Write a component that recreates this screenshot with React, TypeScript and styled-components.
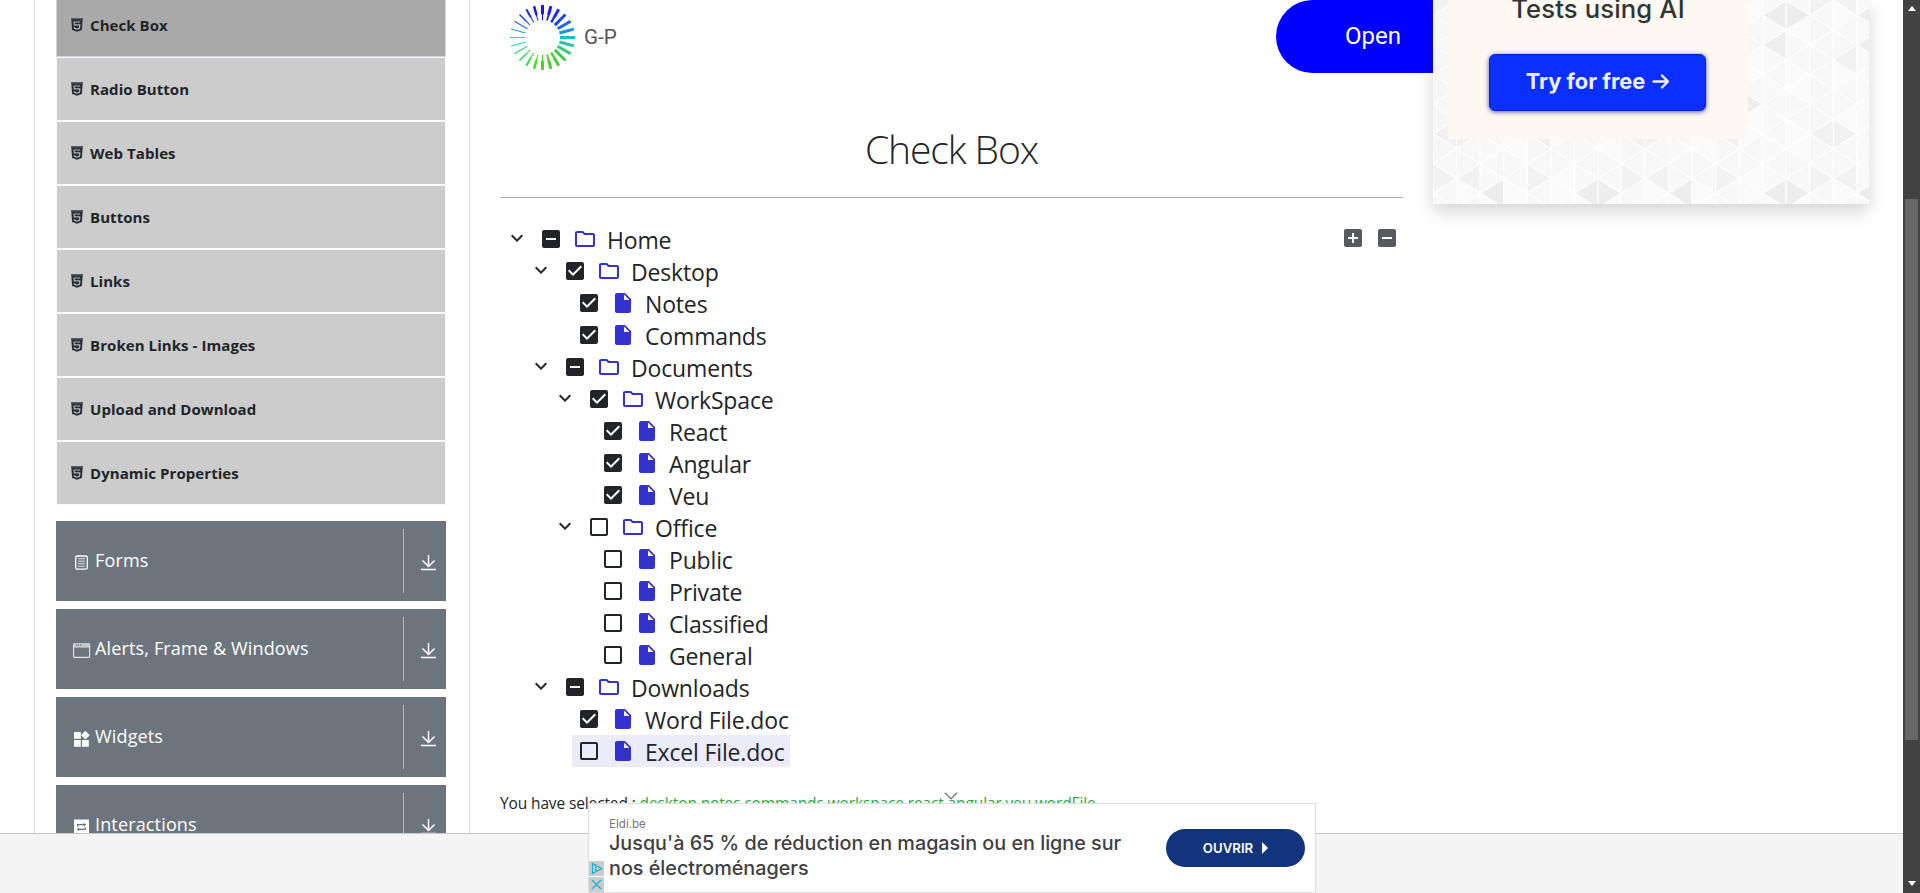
import React from 'react';
import styled, { createGlobalStyle } from 'styled-components';

const GlobalStyle = createGlobalStyle`
  *, *::before, *::after { box-sizing: border-box; }
  html, body { margin: 0; padding: 0; overflow: hidden; background: #fff; }
  body { font-family: "Open Sans", "Noto Sans", sans-serif; color: #212529; }
  svg { display: block; flex: none; }
`;

/* ---------- page frame ---------- */
const Frame = styled.div`
  display: grid;
  grid-template-columns: minmax(0, 1fr) 17px;
  height: 893px;
  overflow: hidden;
`;
const Page = styled.div`
  position: relative;
  overflow: hidden;
`;
const Columns = styled.div`
  display: grid;
  grid-template-columns: 436px 963px 436px;
  height: 893px;
  padding-left: 34px;
`;

/* ---------- scrollbar ---------- */
const Scrollbar = styled.div`
  display: flex;
  flex-direction: column;
  align-items: center;
  justify-content: space-between;
  background: #424242;
  padding: 6px 0 7px;
`;
const Thumb = styled.div`
  width: 13px;
  height: 541px;
  margin-top: 46px;
  background: #686868;
`;
const Arrow = styled.svg.attrs({ width: 8, height: 5, viewBox: '0 0 8 5' })`
  fill: #fff;
`;

/* ---------- sidebar ---------- */
const Sidebar = styled.aside`
  border: solid #dcdcdc;
  border-width: 0 1px;
  padding: 0 23px 0 21px;
`;
const MenuList = styled.ul`
  list-style: none;
  margin: -7px 0 16px;
  padding: 0;
`;
const MenuItem = styled.li<{ $active?: boolean }>`
  display: flex;
  align-items: center;
  gap: 7px;
  height: 64px;
  padding: 0 14px;
  border: 1px solid ${p => (p.$active ? '#ced4da' : '#f8f9fa')};
  background: ${p => (p.$active ? '#a9a9a9' : '#ccc')};
  font-size: 15px;
  font-weight: 700;
  letter-spacing: 0.07px;
  white-space: nowrap;
  svg { margin-top: -1px; }
`;
const GroupHeader = styled.div`
  display: flex;
  align-items: center;
  height: 80px;
  margin-bottom: 8px;
  padding-left: 17px;
  background: #6c757d;
  color: #fff;
`;
const GroupTitle = styled.span`
  flex: 1;
  padding-bottom: 2px;
  margin-left: 4px;
  font-size: 18px;
  letter-spacing: 0.15px;
  white-space: nowrap;
`;
const GroupToggle = styled.span`
  display: flex;
  align-items: center;
  justify-content: flex-end;
  width: 43px;
  height: 64px;
  padding: 4px 10px 0 0;
  border-left: 1px solid #b5babd;
`;
const GroupIcon = styled.svg.attrs({ width: 18, height: 18, viewBox: '0 0 18 18', fill: 'none' })`
  margin-top: 3px;
`;

/* ---------- centre column ---------- */
const Main = styled.main`
  min-width: 0;
  padding: 0 30px;
`;
const Banner = styled.header`
  display: flex;
  height: 73px;
  margin-right: -30px;
  padding-left: 10px;
`;
const BannerLogo = styled.svg.attrs({ width: 65, height: 65, viewBox: '-32.5 -32.5 65 65' })`
  margin-top: 5px;
`;
const BannerName = styled.span`
  flex: 1;
  margin: 25px 0 0 9px;
  font: 400 20.6px/24px Roboto, sans-serif;
  color: #555;
`;
const OpenButton = styled.div`
  width: 157px;
  padding-left: 69px;
  border-radius: 36.5px 0 0 36.5px;
  background: #00f;
  color: #fff;
  font: 400 24px/72px Roboto, sans-serif;
`;
const Title = styled.h1`
  height: 123px;
  margin: 0;
  padding-top: 49px;
  text-align: center;
  font-size: 39px;
  font-weight: 300;
  line-height: 54px;
  letter-spacing: -1.1px;
`;
const Rule = styled.hr`
  margin: 1px 0 25px;
  border: 0;
  border-top: 1px solid #acacac;
`;
const TreeArea = styled.section`
  display: flex;
  justify-content: space-between;
  align-items: flex-start;
`;
const Tree = styled.ul`
  list-style: none;
  margin: 0;
  padding: 0;
`;
const TreeRow = styled.li<{ $depth: number }>`
  display: flex;
  height: 32px;
  padding-left: ${p => p.$depth * 24}px;
`;
const Expander = styled.span<{ $leaf: boolean }>`
  width: ${p => (p.$leaf ? 24 : 34)}px;
  padding: 3px 0 0 5px;
`;
const TreeLabel = styled.span<{ $hover?: boolean }>`
  display: flex;
  gap: 10px;
  padding: 4px 5px 0;
  background: ${p => (p.$hover ? '#ebebfa' : 'transparent')};
`;
const TreeText = styled.span`
  margin-top: -4px;
  font-size: 23px;
  line-height: 34px;
  letter-spacing: -0.16px;
  white-space: nowrap;
`;
const TreeTools = styled.div`
  display: flex;
  gap: 10px;
  padding: 3px 4px 0 0;
`;
const Result = styled.p`
  display: flex;
  gap: 4px;
  margin: 24px 0 0;
  font-size: 15.5px;
  line-height: 24px;
  letter-spacing: -0.13px;
  white-space: nowrap;
`;
const ResultNames = styled.span`
  color: #28a745;
`;

/* ---------- right promo card ---------- */
const Card = styled.aside`
  display: grid;
  width: 436px;
  height: 204px;
  box-shadow: 0 8px 16px rgba(0, 0, 0, 0.16);
  > * { grid-area: 1 / 1; }
`;
const Promo = styled.div`
  z-index: 1;
  width: 300px;
  height: 139px;
  margin-left: 15px;
  padding-left: 41px;
  background: #fdf8f2;
  font-family: Inter, sans-serif;
`;
const PromoText = styled.div`
  width: 218px;
  height: 54px;
  margin-top: -8px;
  text-align: center;
  color: #333;
  font-size: 25.6px;
  font-weight: 550;
  line-height: 34px;
  letter-spacing: 0.15px;
  white-space: nowrap;
`;
const PromoButton = styled.div`
  display: flex;
  align-items: center;
  justify-content: center;
  gap: 7px;
  width: 217px;
  height: 57px;
  margin-top: 8px;
  padding-bottom: 3px;
  border-radius: 6px;
  border: 1px solid #0a22d0;
  background: #0a2fff;
  box-shadow: 0 1px 5px rgba(30, 40, 140, 0.75);
  color: #eef0ff;
  font-size: 21.8px;
  font-weight: 700;
  white-space: nowrap;
`;

/* ---------- anchored ad ---------- */
const Footer = styled.footer`
  position: absolute;
  left: 0;
  right: 0;
  bottom: 0;
  height: 60px;
  border-top: 1px solid #c8c8c8;
  background: #f4f4f4;
`;
const AdCollapse = styled.svg.attrs({ width: 14, height: 8, viewBox: '0 0 14 8' })`
  position: absolute;
  left: 944px;
  top: -42px;
`;
const Ad = styled.div`
  position: absolute;
  left: 588px;
  top: -31px;
  display: flex;
  width: 728px;
  height: 90px;
  border: 1px solid #dedede;
  background: #fff;
  font-family: Inter, sans-serif;
`;
const AdBadges = styled.div`
  display: flex;
  flex-direction: column;
  justify-content: flex-end;
  gap: 1px;
  width: 15px;
`;
const AdBadge = styled.svg.attrs({ width: 15, height: 15, viewBox: '0 0 15 15', fill: 'none', stroke: '#14b1d3', strokeWidth: 1.3 })`
  background: #ccc;
`;
const AdCopy = styled.div`
  flex: 1;
  padding: 12px 0 0 5px;
`;
const AdSource = styled.div`
  height: 15px;
  color: #757679;
  font-size: 11.6px;
  line-height: 16px;
`;
const AdHeadline = styled.div`
  color: #3e4044;
  font-size: 19.75px;
  font-weight: 500;
  line-height: 25px;
  white-space: nowrap;
`;
const AdButton = styled.div`
  display: flex;
  align-items: center;
  justify-content: center;
  gap: 9px;
  width: 139px;
  height: 38px;
  margin: 25px 10px 0 0;
  border-radius: 19px;
  background: #11347c;
  color: #fff;
  font-size: 13.2px;
  font-weight: 600;
`;

/* ---------- drawings ---------- */
const HtmlIcon = () => (
  <svg width="12" height="14" viewBox="0 0 12 14">
    <path d="M0 0h12v1.6H0z" fill="#5b5e61" />
    <path d="M.3 1.2h11.4L10.9 12 6 13.8 1.1 12z" fill="#2a2e32" />
    <path d="M9.200 4H3.100l.2 2.900h5.500l-.3 3.400-2.500.8-2.500-.8-.1-1.200" fill="none" stroke="#b4b7b9" strokeWidth="1.150" />
  </svg>
);
const DownloadIcon = () => (
  <svg width="15" height="16" viewBox="0 0 15 16" fill="none" stroke="#fff" strokeWidth="1.5">
    <path d="M7.5 0v11.3M1.5 5.500l6 6 6-6M0 14.600h15" />
  </svg>
);
const groupIcons: Record<string, React.ReactNode> = {
  forms: (
    <>
      <rect x="2.7" y="2" width="11.6" height="13.2" rx="1.6" stroke="#fff" strokeWidth="1.3" />
      <path d="M5 4.7h7M5 7.2h7M5 9.7h7M5 12.2h7" stroke="#e2e4e6" strokeWidth="1" />
    </>
  ),
  windows: (
    <>
      <rect x=".6" y="1.8" width="16" height="13.6" rx=".6" stroke="#e4e6e8" strokeWidth="1.1" />
      <path d="M.6 3h16" stroke="#c4c8cb" strokeWidth="2" />
      <path d="M.6 4.9h16" stroke="#fff" strokeWidth="1" />
      <path d="M3.5 2v2M5.5 2v2M7.5 2v2" stroke="#6c757d" strokeWidth=".8" />
    </>
  ),
  widgets: <path fill="#fff" d="M1 2h6.8v6.8H1zM1 10h6.8v6.8H1zM9 10h6.8v6.8H9zM12.4.8l4.4 4.4-4.4 4.4L8 5.2z" />,
  interactions: (
    <>
      <rect x="1" y="1.5" width="15" height="15" fill="#fff" />
      <path d="M4.700 8.800V6.700h6.500M12.300 9.200v2.100H5.800" stroke="#6c757d" strokeWidth="1.3" />
      <path d="M10.800 4.700l2.500 2-2.500 2zM6.200 9.300l-2.500 2 2.500 2z" fill="#6c757d" />
    </>
  ),
};
const glyphs = {
  checked: 'M19 3H5c-1.11 0-2 .9-2 2v14c0 1.1.89 2 2 2h14c1.11 0 2-.9 2-2V5c0-1.1-.89-2-2-2zm-9 14l-5-5 1.41-1.41L10 14.17l7.59-7.59L19 8l-9 9z',
  partial: 'M19 3H5c-1.1 0-2 .9-2 2v14c0 1.1.9 2 2 2h14c1.1 0 2-.9 2-2V5c0-1.1-.9-2-2-2zm-2 10H7v-2h10v2z',
  empty: 'M19 5v14H5V5h14m0-2H5c-1.1 0-2 .9-2 2v14c0 1.1.9 2 2 2h14c1.1 0 2-.9 2-2V5c0-1.1-.9-2-2-2z',
  plus: 'M19 3H5c-1.11 0-2 .9-2 2v14c0 1.1.89 2 2 2h14c1.1 0 2-.9 2-2V5c0-1.1-.9-2-2-2zm-2 10h-4v4h-2v-4H7v-2h4V7h2v4h4v2z',
  folder: 'M9.17 6l2 2H20v10H4V6h5.17M10 4H4c-1.1 0-1.99.9-1.99 2L2 18c0 1.1.9 2 2 2h16c1.1 0 2-.9 2-2V8c0-1.1-.9-2-2-2h-8l-2-2z',
  file: 'M6 2c-1.1 0-1.99.9-1.99 2L4 20c0 1.1.89 2 1.99 2H18c1.1 0 2-.9 2-2V8l-6-6H6zm7 7V3.5L18.5 9H13z',
  chevron: 'M7.41 8.59L12 13.17l4.59-4.58L18 10l-6 6-6-6z',
};
const Glyph = ({ kind, color = '#212529' }: { kind: keyof typeof glyphs; color?: string }) => (
  <svg width="24" height="24" viewBox="0 0 24 24" fill={color}><path d={glyphs[kind]} /></svg>
);

const mix = (a: number[], b: number[], t: number) => a.map((v, i) => Math.round(v + (b[i] - v) * t));
const Sunburst = () => (
  <BannerLogo>
    {Array.from({ length: 24 }, (_, i) => {
      const deg = i * 15;
      const rad = (deg * Math.PI) / 180;
      const down = (1 - Math.cos(rad)) / 2;
      const right = Math.sin(rad);
      const mid = right >= 0 ? [28, 190, 210] : [40, 205, 215];
      const end = right >= 0 ? [80, 210, 25] : [60, 225, 30];
      const c = down < 0.5 ? mix([22, 22, 255], mid, down * 2) : mix(mid, end, (down - 0.5) * 2);
      const outer = right >= 0 ? 1.5 : 1.5 - 1 * -right;
      const inner = right >= 0 ? Math.min(1.5, 0.55 + right * 1.3) : 0.5;
      return (
        <path
          key={deg}
          transform={`rotate(${deg})`}
          fill={`rgb(${c.join(',')})`}
          d={`M${-outer} -32.5H${outer}V-24L${inner} -22.5V-17.5H${-inner}V-22.5L${-outer} -24z`}
        />
      );
    })}
  </BannerLogo>
);

const COL = 23.55;
const HALF = 14.83;
const Pattern = () => {
  const tiles: React.ReactNode[] = [];
  for (let c = 0; c < 19; c++) {
    for (let r = -13; r <= 2; r++) {
      const m = c % 8;
      const q = (r + 24) % 12;
      const x = c * COL;
      const y = 178.5 + r * HALF;
      let shade = 247 + ((c * 7 + r * r * 5 + c * r * 3 + 400) % 4);
      if (q === 1 && (m === 2 || m === 6 || m === 7)) shade = 237;
      else if (q === 0 && (m === 0 || m === 1 || m === 4)) shade = 242;
      else if ((q === 9 && (m < 2 || m === 4)) || (q === 4 && m === 1)) shade = 241;
      else if ((q === 7 && m === 5) || (q === 3 && (m === 6 || m === 2))) shade = 238;
      const [edge, tip] = (c + r + 40) % 2 === 0 ? [x, x + COL] : [x + COL, x];
      tiles.push(
        <path key={`${c}:${r}`} d={`M${edge} ${y - HALF}L${tip} ${y}L${edge} ${y + HALF}z`} fill={`rgb(${shade},${shade},${shade})`} stroke="#fefefe" strokeWidth="1.1" />,
      );
    }
  }
  return <svg width="436" height="204" viewBox="0 0 436 204">{tiles}</svg>;
};

/* ---------- data ---------- */
const menu = ['Check Box', 'Radio Button', 'Web Tables', 'Buttons', 'Links', 'Broken Links - Images', 'Upload and Download', 'Dynamic Properties'];
const groups: [string, string][] = [
  ['forms', 'Forms'],
  ['windows', 'Alerts, Frame & Windows'],
  ['widgets', 'Widgets'],
  ['interactions', 'Interactions'],
];
type Check = 'checked' | 'partial' | 'empty';
type Node = { name: string; depth: number; check: Check; leaf?: boolean; hover?: boolean };
const nodes: Node[] = [
  { name: 'Home', depth: 0, check: 'partial' },
  { name: 'Desktop', depth: 1, check: 'checked' },
  { name: 'Notes', depth: 2, check: 'checked', leaf: true },
  { name: 'Commands', depth: 2, check: 'checked', leaf: true },
  { name: 'Documents', depth: 1, check: 'partial' },
  { name: 'WorkSpace', depth: 2, check: 'checked' },
  { name: 'React', depth: 3, check: 'checked', leaf: true },
  { name: 'Angular', depth: 3, check: 'checked', leaf: true },
  { name: 'Veu', depth: 3, check: 'checked', leaf: true },
  { name: 'Office', depth: 2, check: 'empty' },
  { name: 'Public', depth: 3, check: 'empty', leaf: true },
  { name: 'Private', depth: 3, check: 'empty', leaf: true },
  { name: 'Classified', depth: 3, check: 'empty', leaf: true },
  { name: 'General', depth: 3, check: 'empty', leaf: true },
  { name: 'Downloads', depth: 1, check: 'partial' },
  { name: 'Word File.doc', depth: 2, check: 'checked', leaf: true },
  { name: 'Excel File.doc', depth: 2, check: 'empty', leaf: true, hover: true },
];

export default function App() {
  return (
    <>
      <GlobalStyle />
      <Frame>
        <Page>
          <Columns>
            <Sidebar>
              <MenuList>
                {menu.map((m, i) => (
                  <MenuItem key={m} $active={i === 0}><HtmlIcon />{m}</MenuItem>
                ))}
              </MenuList>
              {groups.map(([icon, label]) => (
                <GroupHeader key={icon}>
                  <GroupIcon>{groupIcons[icon]}</GroupIcon>
                  <GroupTitle>{label}</GroupTitle>
                  <GroupToggle><DownloadIcon /></GroupToggle>
                </GroupHeader>
              ))}
            </Sidebar>
            <Main>
              <Banner>
                <Sunburst />
                <BannerName>G-P</BannerName>
                <OpenButton>Open</OpenButton>
              </Banner>
              <Title>Check Box</Title>
              <Rule />
              <TreeArea>
                <Tree>
                  {nodes.map(n => (
                    <TreeRow key={n.name} $depth={n.depth}>
                      <Expander $leaf={!!n.leaf}>{!n.leaf && <Glyph kind="chevron" />}</Expander>
                      <TreeLabel $hover={n.hover}>
                        <Glyph kind={n.check} />
                        <Glyph kind={n.leaf ? 'file' : 'folder'} color="#3333cc" />
                        <TreeText>{n.name}</TreeText>
                      </TreeLabel>
                    </TreeRow>
                  ))}
                </Tree>
                <TreeTools>
                  <Glyph kind="plus" color="#565a5d" />
                  <Glyph kind="partial" color="#565a5d" />
                </TreeTools>
              </TreeArea>
              <Result>
                <span>You have selected :</span>
                <ResultNames>desktop notes commands workspace react angular veu wordFile</ResultNames>
              </Result>
            </Main>
            <Card>
              <Pattern />
              <Promo>
                <PromoText>Tests using AI</PromoText>
                <PromoButton>
                  Try for free
                  <svg width="17" height="16" viewBox="0 0 17 16" fill="none" stroke="#eef0ff" strokeWidth="2.4" strokeLinecap="round" strokeLinejoin="round">
                    <path d="M1.5 8.5h14M10 2.5l6 6-6 6" />
                  </svg>
                </PromoButton>
              </Promo>
            </Card>
          </Columns>
          <Footer>
            <AdCollapse><path d="M.8 .8L7 6.8 13.2 .8" fill="none" stroke="#777" strokeWidth="1.3" /></AdCollapse>
            <Ad>
              <AdBadges>
                <AdBadge><path d="M3.500 2.500v10l9-5zM6.800 5v5M6.800 3.500v.8" /></AdBadge>
                <AdBadge><path d="M3 3l9 9M12 3l-9 9" /></AdBadge>
              </AdBadges>
              <AdCopy>
                <AdSource>Eldi.be</AdSource>
                <AdHeadline>Jusqu'à 65 % de réduction en magasin ou en ligne sur<br />nos électroménagers</AdHeadline>
              </AdCopy>
              <AdButton>
                OUVRIR
                <svg width="6" height="12" viewBox="0 0 6 12" fill="#fff"><path d="M0 0l6 6-6 6z" /></svg>
              </AdButton>
            </Ad>
          </Footer>
        </Page>
        <Scrollbar>
          <Arrow><path d="M4 0l4 5H0z" /></Arrow>
          <Thumb />
          <Arrow><path d="M4 5l4-5H0z" /></Arrow>
        </Scrollbar>
      </Frame>
    </>
  );
}
